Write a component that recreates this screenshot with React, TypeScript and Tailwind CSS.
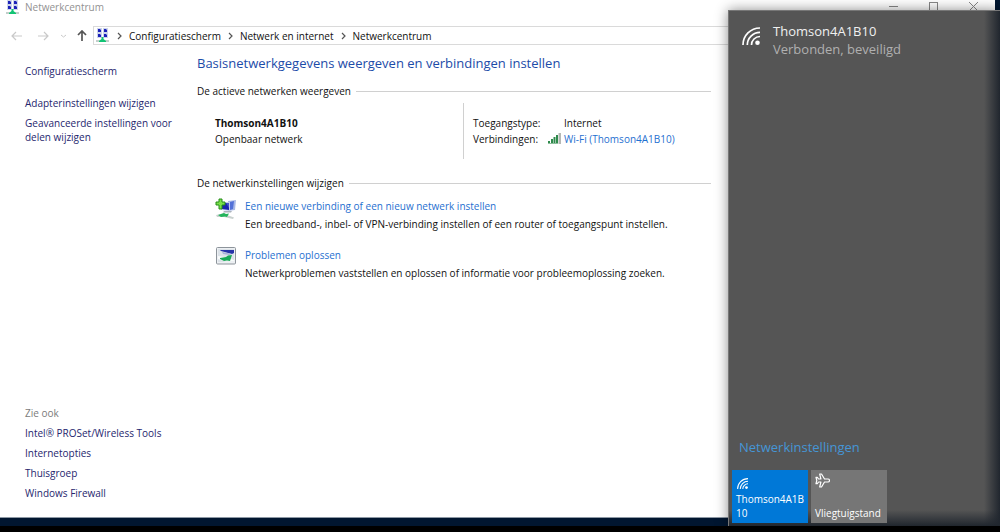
import type { ReactNode } from 'react'

const RELATED_LINKS = ['Intel® PROSet/Wireless Tools', 'Internetopties', 'Thuisgroep', 'Windows Firewall']

const BREADCRUMBS = ['Configuratiescherm', 'Netwerk en internet', 'Netwerkcentrum']

function NetworkCenterIcon() {
    return (
        <svg viewBox="0 0 14 15" className="h-[15px] w-[14px] shrink-0" aria-hidden="true">
            <path d="M1 0h5v5H1zM7 0h5v5H7zM1 5h5v5H1zM7 5h5v5H7z" fill="#cdd5ea" />
            <path d="M2 1h3v3H2zM8 1h3v3H8zM2 6h3v3H2zM8 6h3v3H8z" fill="#1c22b8" />
            <path d="M4 1h1v1H4zM10 1h1v1h-1zM4 6h1v1H4zM10 6h1v1h-1z" fill="#7b86dc" />
            <path d="M0 12h13v2H0z" fill="#c3cfcb" />
            <path d="M5.500 9h2v2l2.500 2v1H3v-1l2.500-2z" fill="#12c474" />
        </svg>
    )
}

function ArrowIcon({ direction }: { direction: 'left' | 'right' | 'up' }) {
    const paths = {
        left: 'M11 6H1M5 2L1 6l4 4',
        right: 'M1 6h10M7 2l4 4-4 4',
        up: 'M6 11V1M2 5l4-4 4 4',
    }

    return (
        <svg viewBox="0 0 12 12" className="h-3 w-3" fill="none" stroke="currentColor" aria-hidden="true">
            <path d={paths[direction]} strokeWidth={direction === 'up' ? 1.7 : 1.2} />
        </svg>
    )
}

function Chevron() {
    return (
        <svg viewBox="0 0 5 8" className="h-2 w-[5px]" fill="none" stroke="#555" strokeWidth="1.2" aria-hidden="true">
            <path d="M1 1l3 3-3 3" />
        </svg>
    )
}

function WifiIcon({ className }: { className: string }) {
    return (
        <svg viewBox="0 0 18 18" className={className} fill="none" stroke="currentColor" strokeWidth="1.7" aria-hidden="true">
            <path d="M1 18C1 8.500 8.500 1 18 1M5.300 18C5.300 11 11 5.300 18 5.300M9.500 18C9.500 13.300 13.300 9.500 18 9.500" />
            <circle cx="15.500" cy="15.700" r="2.300" fill="currentColor" stroke="none" />
        </svg>
    )
}

function PlaneIcon() {
    return (
        <svg viewBox="0 0 15 15" className="h-[15px] w-[15px]" fill="none" stroke="currentColor" strokeWidth="1.2" strokeLinejoin="round" aria-hidden="true">
            <path d="M4.700 1h1.800L9.500 6H13a1.500 1.500 0 0 1 0 3H9.500L6.500 14H4.700L5.900 9H3.600L2.300 10.700H1L1.800 7.500 1 4.300h1.300L3.600 6h2.300z" />
        </svg>
    )
}

function SignalIcon() {
    return (
        <svg viewBox="0 0 13 12" className="h-3 w-[13px]" aria-hidden="true">
            <path d="M0 8h2v3H0zM3 6h2v5H3zM5.500 4h2v7h-2zM8 2h2v9H8z" fill="#2f8a4c" />
            <path d="M10.500 0H13v11h-2.500z" fill="#b5b8b5" />
            <path d="M0 10h10v1H0z" fill="#8dbf9c" />
        </svg>
    )
}

function NewConnectionIcon() {
    return (
        <svg viewBox="0 0 22 22" className="h-[22px] w-[22px]" aria-hidden="true">
            <path d="M13 3l8-1-1 10-7 1z" fill="#a9b9e6" />
            <path d="M15 4l4-1-1 8-3 1z" fill="#5371d8" />
            <path d="M5 4l10 0v9l-9-1z" fill="#c5cdec" />
            <path d="M6 5l8 0v7l-7-1z" fill="#1b25b0" />
            <path d="M11 5h3v5z" fill="#4552cf" />
            <path d="M9 13l8 0-1 1.500H8z" fill="#aab2bb" />
            <path d="M1 17l7-1.500 11 4-1 1.500-9-2-7 0z" fill="#c9d1cf" />
            <path d="M3 17l6-2 2 1 3-.5-2 3.500-2-.5-4 .5z" fill="#22b45b" />
            <path d="M4 1h3v3h3v3H7v4H4V7H1V4h3z" fill="#7be04a" stroke="#258c18" />
        </svg>
    )
}

function TroubleshootIcon() {
    return (
        <svg viewBox="0 0 20 18" className="mx-px h-[18px] w-5" aria-hidden="true">
            <rect x="0.500" y="0.500" width="19" height="16.500" rx="1" fill="#edf0f3" stroke="#8d949b" />
            <path d="M2 2h16v13H2z" fill="#dce2e8" />
            <path d="M4 3h14v3l-2 1-11-3z" fill="#2632a8" />
            <path d="M6 5l10 2-3 1-6-1z" fill="#a7b1d9" />
            <path d="M2 9l7 1 9 3v1.500H9L2 12z" fill="#f9fbfb" />
            <path d="M4 11l6-1 2-1.500 4-.5-2 6-3-.5-3 .5-4-2z" fill="#18a957" />
        </svg>
    )
}

function SectionHeading({ children }: { children: ReactNode }) {
    return (
        <div className="flex items-center gap-[5px]">
            <h2 className="leading-4">{children}</h2>
            <div className="h-px flex-1 bg-[#d0d0d0]" />
        </div>
    )
}

function TaskItem({ icon, title, text }: { icon: ReactNode; title: string; text: string }) {
    return (
        <div className="flex gap-2">
            <div className="shrink-0">{icon}</div>
            <div>
                <a href="#" className="block leading-4 text-[#1f70d0]">
                    {title}
                </a>
                <p className="mt-0.5 leading-4">{text}</p>
            </div>
        </div>
    )
}

function NetworkWindow() {
    return (
        <div className="mr-[5px] flex min-h-0 flex-1 flex-col overflow-hidden border-b border-[#8e99a5] bg-white">
            <header className="flex h-[26px] shrink-0 items-start justify-between">
                <div className="flex gap-[5px] pl-1.5">
                    <NetworkCenterIcon />
                    <h1 className="leading-[14px] text-[#929292]">Netwerkcentrum</h1>
                </div>
                <div className="flex gap-[31px] pt-0.5 pr-[17px] text-[#888]">
                    <button type="button" aria-label="Minimaliseren" className="h-[9px] w-[9px]">
                        <div className="h-px bg-current" />
                    </button>
                    <button type="button" aria-label="Maximaliseren" className="h-[9px] w-[9px] border border-current" />
                    <button type="button" aria-label="Sluiten" className="h-[9px] w-[9px]">
                        <svg viewBox="0 0 9 9" className="h-[9px] w-[9px]" stroke="currentColor" aria-hidden="true">
                            <path d="M0 0l9 9M9 0L0 9" />
                        </svg>
                    </button>
                </div>
            </header>

            <nav className="flex h-[19px] shrink-0 items-center pl-[11px]">
                <button type="button" aria-label="Vorige" className="mr-3.5 text-[#c9c9c9]">
                    <ArrowIcon direction="left" />
                </button>
                <button type="button" aria-label="Volgende" className="mr-3 text-[#c9c9c9]">
                    <ArrowIcon direction="right" />
                </button>
                <button type="button" aria-label="Recente locaties" className="mr-2.5 text-[#c9c9c9]">
                    <svg viewBox="0 0 5 4" className="h-1 w-[5px]" fill="none" stroke="currentColor" aria-hidden="true">
                        <path d="M0 1l2.500 2L5 1" />
                    </svg>
                </button>
                <button type="button" aria-label="Omhoog" className="mr-[5px] text-[#555]">
                    <ArrowIcon direction="up" />
                </button>
                <ol className="flex h-full flex-1 items-center border border-[#dadada] pl-0.5">
                    <li>
                        <NetworkCenterIcon />
                    </li>
                    {BREADCRUMBS.map((crumb) => (
                        <li key={crumb} className="flex items-center">
                            <span className="mx-[7px]">
                                <Chevron />
                            </span>
                            <a href="#" className="leading-4">
                                {crumb}
                            </a>
                        </li>
                    ))}
                </ol>
            </nav>

            <div className="flex min-h-0 flex-1">
                <aside className="flex w-[197px] shrink-0 flex-col justify-between pt-[19px] pb-[17px] pl-[25px] text-[#26266e]">
                    <ul className="leading-[14px]">
                        <li className="mb-[18px]">
                            <a href="#">Configuratiescherm</a>
                        </li>
                        <li className="mb-1.5">
                            <a href="#">Adapterinstellingen wijzigen</a>
                        </li>
                        <li>
                            <a href="#">
                                Geavanceerde instellingen voor
                                <br />
                                delen wijzigen
                            </a>
                        </li>
                    </ul>
                    <div className="leading-[14px]">
                        <h2 className="text-[#7b7b7b]">Zie ook</h2>
                        <ul>
                            {RELATED_LINKS.map((label) => (
                                <li key={label} className="mt-1.5">
                                    <a href="#">{label}</a>
                                </li>
                            ))}
                        </ul>
                    </div>
                </aside>

                <main className="flex-1 pt-2 pr-[284px]">
                    <h1 className="text-[13px] leading-5 text-[#1c4ba8]">
                        Basisnetwerkgegevens weergeven en verbindingen instellen
                    </h1>

                    <section className="mt-2.5">
                        <SectionHeading>De actieve netwerken weergeven</SectionHeading>
                        <div className="mt-1 flex pl-[18px]">
                            <div className="flex-1 pt-3">
                                <p className="leading-4 font-bold">Thomson4A1B10</p>
                                <p className="leading-4">Openbaar netwerk</p>
                            </div>
                            <dl className="grid h-14 w-[248px] grid-cols-[75px_1fr] content-start border-l border-[#d0d0d0] pt-3 pl-[9px] leading-4">
                                <dt>Toegangstype:</dt>
                                <dd className="pl-4">Internet</dd>
                                <dt>Verbindingen:</dt>
                                <dd className="flex items-center gap-[3px]">
                                    <SignalIcon />
                                    <a href="#" className="text-[#1f70d0]">
                                        Wi-Fi (Thomson4A1B10)
                                    </a>
                                </dd>
                            </dl>
                        </div>
                    </section>

                    <section className="mt-4">
                        <SectionHeading>De netwerkinstellingen wijzigen</SectionHeading>
                        <div className="mt-[7px] flex flex-col gap-[15px] pl-[18px] whitespace-nowrap">
                            <TaskItem
                                icon={<NewConnectionIcon />}
                                title="Een nieuwe verbinding of een nieuw netwerk instellen"
                                text="Een breedband-, inbel- of VPN-verbinding instellen of een router of toegangspunt instellen."
                            />
                            <TaskItem
                                icon={<TroubleshootIcon />}
                                title="Problemen oplossen"
                                text="Netwerkproblemen vaststellen en oplossen of informatie voor probleemoplossing zoeken."
                            />
                        </div>
                    </section>
                </main>
            </div>
        </div>
    )
}

function NetworkFlyout() {
    return (
        <aside className="absolute top-2.5 right-0 bottom-1.5 flex w-[272px] flex-col justify-between border-t border-l border-[#777] bg-[#555] text-white shadow-[0_0_12px_rgba(0,0,0,0.45)]">
            <div className="pointer-events-none absolute inset-y-0 right-0 w-4 bg-linear-to-r from-transparent to-[#20262e]" />
            <div className="pointer-events-none absolute inset-x-0 bottom-0 h-4 bg-linear-to-b from-transparent to-[#20262e]" />
            <div className="flex gap-[13px] pt-[11px] pl-[13px]">
                <WifiIcon className="mt-[5px] h-[18px] w-[18px]" />
                <div className="text-[13px] leading-[18px]">
                    <p className="text-[#f0f0f0]">Thomson4A1B10</p>
                    <p className="text-[#b0b0b0]">Verbonden, beveiligd</p>
                </div>
            </div>
            <div className="relative pb-[3px] pl-[3px]">
                <a href="#" className="ml-[7px] block text-[13px] leading-[18px] text-[#4595d6]">
                    Netwerkinstellingen
                </a>
                <div className="mt-3.5 flex gap-[3px]">
                    <button type="button" className="flex h-[53px] w-[76px] flex-col items-start justify-between bg-[#0078d7] px-1 pt-2 pb-[3px] text-left leading-[14px]">
                        <WifiIcon className="h-[11px] w-[13px]" />
                        <span>
                            Thomson4A1B
                            <br />
                            10
                        </span>
                    </button>
                    <button type="button" className="flex h-[53px] w-[76px] flex-col items-start justify-between bg-[#767676] px-1 pt-[3px] pb-[3px] text-left leading-[14px]">
                        <PlaneIcon />
                        <span>Vliegtuigstand</span>
                    </button>
                </div>
            </div>
        </aside>
    )
}

export default function App() {
    return (
        <div className="relative flex h-screen flex-col overflow-hidden bg-[#011630] font-['Open_Sans','Noto_Sans',sans-serif] text-[10px] text-[#111]">
            <NetworkWindow />
            <div className="h-2 shrink-0" />
            <div className="h-1.5 shrink-0 bg-black" />
            <NetworkFlyout />
        </div>
    )
}
